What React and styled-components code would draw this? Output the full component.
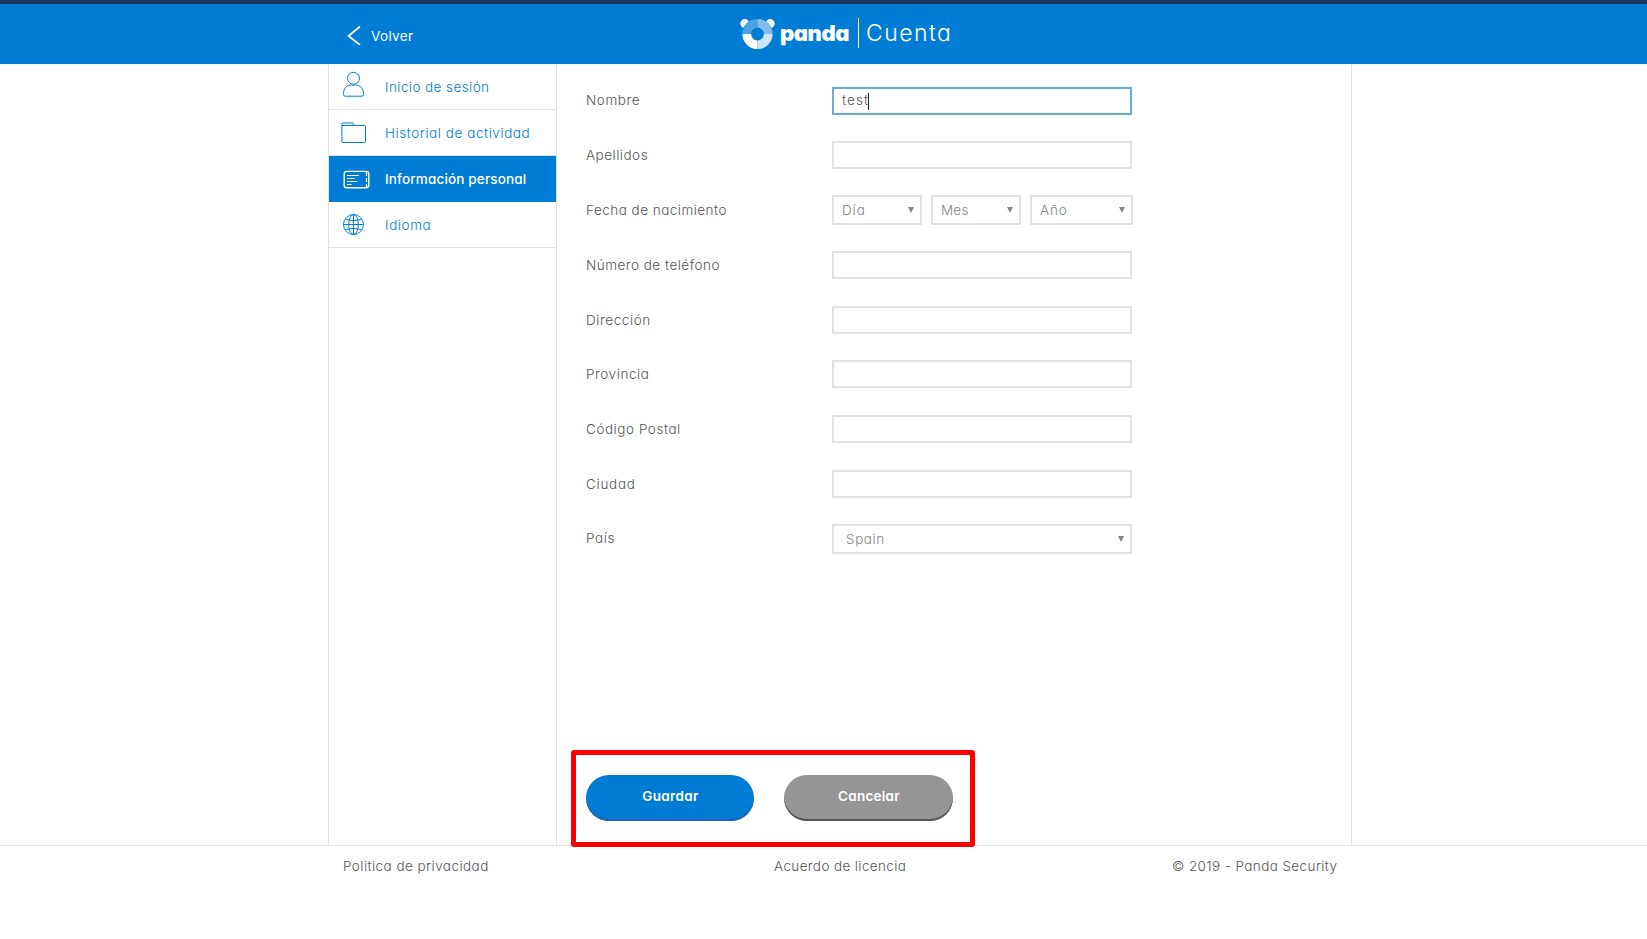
import React from "react";
import styled, { createGlobalStyle } from "styled-components";

const BLUE = "#007cd5";
const LINE = "#e2e2e2";

const GlobalStyle = createGlobalStyle`
  *, *::before, *::after { box-sizing: border-box; }
  body {
    margin: 0;
    background: #fff;
    color: #555;
    font-family: Inter, "Liberation Sans", sans-serif;
    font-feature-settings: "cv11";
    font-size: 13.5px;
    font-weight: 300;
  }
`;

const Page = styled.div`
  width: 1647px;
  height: 939px;
  overflow: hidden;
`;

const Header = styled.header`
  height: 64px;
  padding-left: 347px;
  display: flex;
  align-items: flex-start;
  background: ${BLUE};
  border-top: 4px solid #19355c;
`;

const BackLink = styled.a`
  width: 393px;
  padding-top: 21px;
  display: flex;
  color: #fff;
  font-weight: 400;
  line-height: 23px;
  letter-spacing: 0.35px;
  span { margin-left: 9px; }
`;

const Brand = styled.div`
  display: flex;
  align-items: flex-start;
  color: #fff;
`;

const BrandName = styled.span`
  margin: 13px 0 0 4px;
  width: 78px;
  font-size: 22px;
  font-weight: 900;
  line-height: 32px;
  letter-spacing: -0.4px;
`;

const Product = styled.span`
  height: 30px;
  margin-top: 14px;
  padding-left: 7px;
  border-left: 1px solid #fff;
  font-size: 23px;
  line-height: 31px;
  letter-spacing: 1.45px;
`;

const Main = styled.main`
  width: 1024px;
  height: 781px;
  margin-left: 328px;
  display: flex;
  border: solid ${LINE};
  border-width: 0 1px;
`;

const Sidebar = styled.nav`
  width: 228px;
  border-right: 1px solid ${LINE};
`;

const NavItem = styled.a`
  height: 46px;
  display: flex;
  align-items: center;
  border-bottom: 1px solid ${(p) => (p.$active ? BLUE : LINE)};
  background: ${(p) => (p.$active ? BLUE : "#fff")};
  color: ${(p) => (p.$active ? "#fff" : BLUE)};
  font-weight: ${(p) => (p.$active ? 500 : 300)};
  letter-spacing: ${(p) => p.$track}px;
`;

const NavIcon = styled.svg`
  width: 56px;
  height: 45px;
  flex: none;
  fill: none;
  stroke: currentColor;
  stroke-width: 1;
`;

const Content = styled.section`
  position: relative;
  flex: 1;
  padding: 23px 0 0 29px;
`;

const Row = styled.div`
  height: ${(p) => p.$height}px;
  display: flex;
  align-items: flex-start;
`;

const Label = styled.label`
  width: 246px;
  padding-top: ${(p) => p.$drop || 0}px;
  line-height: ${(p) => p.$leading || 28}px;
  letter-spacing: ${(p) => p.$track}px;
`;

const Field = styled.div`
  width: 300px;
  height: 28px;
  padding: 0 0 2px 8px;
  display: flex;
  align-items: center;
  border: 2px solid ${(p) => (p.$focused ? "#67aadf" : LINE)};
  letter-spacing: 1.1px;
`;

const Caret = styled.i`
  width: 1px;
  height: 17px;
  margin: 2px 0 0 -1px;
  background: #222;
`;

const Selects = styled.div`
  display: flex;
  gap: 9px;
`;

const Select = styled.div`
  width: ${(p) => p.$width}px;
  height: 30px;
  padding: 0 6px 1px ${(p) => p.$pad || 8}px;
  display: flex;
  justify-content: space-between;
  align-items: center;
  border: 2px solid ${LINE};
  color: #858585;
  letter-spacing: ${(p) => p.$track}px;
`;

const Arrow = styled.i`
  border: solid transparent;
  border-width: 6px 3px 0;
  border-top-color: #858585;
`;

const Actions = styled.div`
  position: absolute;
  left: 14px;
  top: 686px;
  width: 404px;
  height: 97px;
  padding: 20px 0 0 10px;
  display: flex;
  gap: 30px;
  border: 5px solid #f00;
  border-radius: 3px;
`;

const Button = styled.button`
  width: ${(p) => p.$width}px;
  height: 46px;
  padding: 0 0 4px 1px;
  border: 0;
  border-radius: 23px;
  background: ${(p) => (p.$muted ? "#959595" : BLUE)};
  box-shadow: inset 0 -2px 0 ${(p) => (p.$muted ? "#555" : "#2460b4")};
  color: #fff;
  font: inherit;
  font-feature-settings: inherit;
  font-weight: 600;
  letter-spacing: ${(p) => p.$track}px;
`;

const Footer = styled.footer`
  height: 94px;
  padding: 10px 308px 0 343px;
  display: flex;
  border-top: 1px solid ${LINE};
  line-height: 20px;
`;

const FooterLink = styled.a`
  width: ${(p) => p.$width}px;
  white-space: nowrap;
  letter-spacing: ${(p) => p.$track}px;
`;

const BrandIcon = styled.svg`
  width: 36px;
  height: 36px;
  margin-top: 12px;
`;

const PandaMark = () => (
  <BrandIcon viewBox="0 0 36 36">
    <circle cx="4.8" cy="7.6" r="4.5" fill="#fff" />
    <circle cx="30.2" cy="7.6" r="4.5" fill="#fff" />
    <circle cx="17.5" cy="18" r="15.3" fill={BLUE} />
    <g fill="none" strokeWidth="8.7">
      <path d="M6.75 18A10.75 10.75 0 0 1 17.5 7.25" stroke="#4ca3e2" />
      <path d="M17.5 7.25A10.75 10.75 0 0 1 28.25 18" stroke="#80bdea" />
      <path d="M28.25 18A10.75 10.75 0 0 1 17.5 28.75" stroke="#cce5f7" />
      <path d="M17.5 28.75A10.75 10.75 0 0 1 6.75 18" stroke="#fff" />
    </g>
  </BrandIcon>
);

const UserIcon = () => (
  <NavIcon viewBox="0 0 56 45">
    <circle cx="24.5" cy="14.3" r="6" />
    <path d="M14.5 30.5v-1c0-5 3.5-8.500 8-8.500h4c4.500 0 8 3.500 8 8.500v1a1.700 1.700 0 0 1-1.700 1.700H16.200a1.700 1.700 0 0 1-1.700-1.700z" />
  </NavIcon>
);

const FolderIcon = () => (
  <NavIcon viewBox="0 0 56 45">
    <path d="M12.900 15.500v-1.500a1 1 0 0 1 1-1h9.500a1 1 0 0 1 1 1v1.500h11.100a1 1 0 0 1 1 1v15a1 1 0 0 1-1 1H13.900a1 1 0 0 1-1-1zH24.400" />
  </NavIcon>
);

const CardIcon = () => (
  <NavIcon viewBox="0 0 56 45">
    <rect x="15.200" y="15.400" width="24.600" height="16.400" rx="2.500" strokeWidth="1.400" />
    <path d="M18 19.500h12M18 22.500h7.500M18 25.500h10.500M18 28.500h4.500M37.500 15.400v4.600m0 2v4m0 2v3.800" strokeWidth="1.200" />
  </NavIcon>
);

const GlobeIcon = () => (
  <NavIcon viewBox="0 0 56 45">
    <circle cx="24.500" cy="22.500" r="10" />
    <ellipse cx="24.500" cy="22.500" rx="4.800" ry="10" />
    <path d="M24.500 12.500v20M14.500 22.500h20M16.500 17.500q8 2.200 16 0M16.500 27.500q8-2.200 16 0" />
  </NavIcon>
);

const NAV = [
  { text: "Inicio de sesión", Icon: UserIcon, track: 0.42 },
  { text: "Historial de actividad", Icon: FolderIcon, track: 0.56 },
  { text: "Información personal", Icon: CardIcon, track: 0.15, active: true },
  { text: "Idioma", Icon: GlobeIcon, track: 0.6 },
];

const ADDRESS_ROWS = [
  ["Número de teléfono", 0.5, 55],
  ["Dirección", 0.6, 54],
  ["Provincia", 0.58, 55],
  ["Código Postal", 0.55, 55],
  ["Ciudad", 0.72, 54],
];

export default function App() {
  return (
    <Page>
      <GlobalStyle />
      <Header>
        <BackLink>
          <svg width="15" height="20" viewBox="0 0 15 20" fill="none" stroke="#fff" strokeWidth="1.7">
            <path d="M13 1.500L1.500 11L13 20" />
          </svg>
          <span>Volver</span>
        </BackLink>
        <Brand>
          <PandaMark />
          <BrandName>panda</BrandName>
          <Product>Cuenta</Product>
        </Brand>
      </Header>
      <Main>
        <Sidebar>
          {NAV.map(({ text, Icon, track, active }) => (
            <NavItem key={text} $track={track} $active={active}>
              <Icon />
              <span>{text}</span>
            </NavItem>
          ))}
        </Sidebar>
        <Content>
          <Row $height={54}>
            <Label $track={0.6} $leading={26}>Nombre</Label>
            <Field $focused>test<Caret /></Field>
          </Row>
          <Row $height={54}>
            <Label $track={0.5}>Apellidos</Label>
            <Field />
          </Row>
          <Row $height={56}>
            <Label $track={0.48} $drop={1}>Fecha de nacimiento</Label>
            <Selects>
              <Select $width={90} $track={0.9}>Día<Arrow /></Select>
              <Select $width={90} $track={0.2}>Mes<Arrow /></Select>
              <Select $width={103} $track={0.9}>Año<Arrow /></Select>
            </Selects>
          </Row>
          {ADDRESS_ROWS.map(([text, track, height]) => (
            <Row key={text} $height={height}>
              <Label $track={track}>{text}</Label>
              <Field />
            </Row>
          ))}
          <Row $height={30}>
            <Label $track={0.6}>País</Label>
            <Select $width={300} $pad={12} $track={0.6}>Spain<Arrow /></Select>
          </Row>
          <Actions>
            <Button $width={168} $track={0.35}>Guardar</Button>
            <Button $width={169} $muted $track={0.25}>Cancelar</Button>
          </Actions>
        </Content>
      </Main>
      <Footer>
        <FooterLink $width={431} $track={0.45}>Politica de privacidad</FooterLink>
        <FooterLink $width={398} $track={0.38}>Acuerdo de licencia</FooterLink>
        <FooterLink $width={167} $track={0.4}>© 2019 - Panda Security</FooterLink>
      </Footer>
    </Page>
  );
}
